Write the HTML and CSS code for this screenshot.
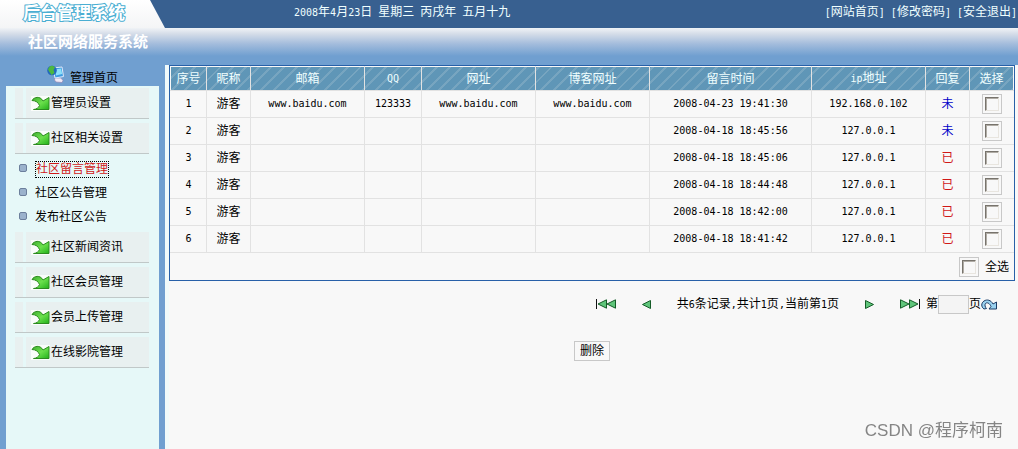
FILE: index.html
```html
<!DOCTYPE html>
<html lang="zh-CN">
<head>
<meta charset="utf-8">
<title>后台管理系统</title>
<link rel="stylesheet" href="styles.css">
</head>
<body>
<svg class="defs" aria-hidden="true">
  <defs>
    <linearGradient id="leaf" x1="0" y1="0" x2="1" y2="1"><stop offset="0" stop-color="#3fae30"/><stop offset=".5" stop-color="#6be04c"/><stop offset="1" stop-color="#22b01a"/></linearGradient>
    <symbol id="arrow" viewBox="0 0 19 15">
      <rect width="19" height="15" fill="#fafdfb"/>
      <path d="M1 4.500C3 1 9 -.5 12 5L18 1.500V13.500H2.500C5 13.500 8 11.500 8.500 9.500C7.500 6.500 4.500 4.500 1 4.500Z" fill="url(#leaf)" stroke="#2d8b20"/>
    </symbol>
    <symbol id="tri" viewBox="0 0 9 9"><path d="M.5.5V8.500L8.500 4.500Z" fill="#5fc57a" stroke="#155c28"/></symbol>
    <symbol id="end" viewBox="0 0 20 10"><path d="M.5.8V9.200L9 5ZM9.500.8V9.200L18 5Z" fill="#5fc57a" stroke="#155c28"/><path d="M19.500 0V10" stroke="#111"/></symbol>
  </defs>
</svg>
<header>
  <div class="topbar">
    <div class="logo"><span>后台管理系统</span></div>
    <div class="date"><span class="num">2008</span>年<span class="num">4</span>月<span class="num">23</span>日<span class="num"> </span>星期三<span class="num"> </span>丙戌年<span class="num"> </span>五月十九</div>
    <nav class="toplinks"><a href="#"><span class="num">[</span>网站首页<span class="num">]</span></a><a href="#"><span class="num">[</span>修改密码<span class="num">]</span></a><a href="#"><span class="num">[</span>安全退出<span class="num">]</span></a></nav>
  </div>
  <h1 class="title">社区网络服务系统</h1>
</header>
<div class="layout">
  <aside class="sidebar">
    <a class="home" href="#">
      <svg width="18" height="18" viewBox="0 0 18 18"><path d="M8 13L14 13L16 15.500L15 17.500L9 17L7.500 15Z" fill="#efeaf6" stroke="#8f86b4" stroke-width=".7"/><path d="M6 3L15 2L16.500 11.500L8 13Z" fill="#3d9be0" stroke="#dfe9fb"/><path d="M8 4.500L14 3.500L15.200 9L9 10.500Z" fill="#8be0fa"/><circle cx="5" cy="5.500" r="4.800" fill="#2368bd"/><path d="M1 4.500C2.500 0 6 0 8 2.500L6.500 5L7.500 8L4.500 10L2.500 7Z" fill="#4cb83f"/></svg>管理首页</a>
    <nav class="menu">
      <a class="item" href="#"><svg class="ico"><use href="#arrow"/></svg>管理员设置</a>
      <a class="item" href="#"><svg class="ico"><use href="#arrow"/></svg>社区相关设置</a>
      <ul class="sub">
        <li><a class="current" href="#">社区留言管理</a></li>
        <li><a href="#">社区公告管理</a></li>
        <li><a href="#">发布社区公告</a></li>
      </ul>
      <a class="item" href="#"><svg class="ico"><use href="#arrow"/></svg>社区新闻资讯</a>
      <a class="item" href="#"><svg class="ico"><use href="#arrow"/></svg>社区会员管理</a>
      <a class="item" href="#"><svg class="ico"><use href="#arrow"/></svg>会员上传管理</a>
      <a class="item" href="#"><svg class="ico"><use href="#arrow"/></svg>在线影院管理</a>
    </nav>
  </aside>
  <main>
    <div class="panel">
      <table>
        <colgroup><col class="c-no"><col class="c-s"><col class="c-m"><col class="c-qq"><col class="c-m"><col class="c-m"><col class="c-time"><col class="c-m"><col class="c-s"><col class="c-s"></colgroup>
        <thead><tr><th>序号</th><th>昵称</th><th>邮箱</th><th><span class="num">QQ</span></th><th>网址</th><th>博客网址</th><th>留言时间</th><th><span class="num">ip</span>地址</th><th>回复</th><th>选择</th></tr></thead>
        <tbody>
          <tr><td class="num">1</td><td>游客</td><td class="num">www.baidu.com</td><td class="num">123333</td><td class="num">www.baidu.com</td><td class="num">www.baidu.com</td><td class="num">2008-04-23 19:41:30</td><td class="num">192.168.0.102</td><td><a class="no" href="#">未</a></td><td><input type="checkbox" aria-label="选择 1"></td></tr>
          <tr><td class="num">2</td><td>游客</td><td></td><td></td><td></td><td></td><td class="num">2008-04-18 18:45:56</td><td class="num">127.0.0.1</td><td><a class="no" href="#">未</a></td><td><input type="checkbox" aria-label="选择 2"></td></tr>
          <tr><td class="num">3</td><td>游客</td><td></td><td></td><td></td><td></td><td class="num">2008-04-18 18:45:06</td><td class="num">127.0.0.1</td><td><a class="yes" href="#">已</a></td><td><input type="checkbox" aria-label="选择 3"></td></tr>
          <tr><td class="num">4</td><td>游客</td><td></td><td></td><td></td><td></td><td class="num">2008-04-18 18:44:48</td><td class="num">127.0.0.1</td><td><a class="yes" href="#">已</a></td><td><input type="checkbox" aria-label="选择 4"></td></tr>
          <tr><td class="num">5</td><td>游客</td><td></td><td></td><td></td><td></td><td class="num">2008-04-18 18:42:00</td><td class="num">127.0.0.1</td><td><a class="yes" href="#">已</a></td><td><input type="checkbox" aria-label="选择 5"></td></tr>
          <tr><td class="num">6</td><td>游客</td><td></td><td></td><td></td><td></td><td class="num">2008-04-18 18:41:42</td><td class="num">127.0.0.1</td><td><a class="yes" href="#">已</a></td><td><input type="checkbox" aria-label="选择 6"></td></tr>
        </tbody>
      </table>
      <label class="all"><input type="checkbox">全选</label>
    </div>
    <div class="pager">
      <a href="#" aria-label="首页"><svg class="flip" width="20" height="10"><use href="#end"/></svg></a>
      <a href="#" aria-label="上一页"><svg class="flip" width="9" height="9"><use href="#tri"/></svg></a>
      <span class="count">共<span class="num">6</span>条记录<span class="num">,</span>共计<span class="num">1</span>页<span class="num">,</span>当前第<span class="num">1</span>页</span>
      <a href="#" aria-label="下一页"><svg width="9" height="9"><use href="#tri"/></svg></a>
      <a href="#" aria-label="末页"><svg width="20" height="10"><use href="#end"/></svg></a>
      <div class="jump">
        <label for="page">第</label><input id="page" type="text"><span>页</span>
        <a href="#" aria-label="跳转"><svg width="16" height="11" viewBox="0 0 16 11"><path d="M3 10C0 8 0 4 3 2C6 0 10 1 12 5L15.500 3V10H8L10 7.500C8.500 4 6 3 4.500 4.500C3.500 6 4 8 5.500 9.500Z" fill="#9ad2f0" stroke="#1d3c66"/></svg></a>
      </div>
    </div>
    <div class="actions"><button type="button">删除</button></div>
  </main>
</div>
<div class="watermark">CSDN @程序柯南</div>
</body>
</html>
```
FILE: styles.css
```css
* { box-sizing: border-box; }
body {
  margin: 0;
  min-height: 100vh;
  display: flex;
  flex-direction: column;
  background: #f8f8f8;
  color: #000;
  font: 12px/16px "Liberation Sans", "Noto Sans CJK SC", sans-serif;
}
a { color: inherit; text-decoration: none; }
svg { display: block; flex: none; }
.defs { position: absolute; width: 0; height: 0; }
.num { font-family: "DejaVu Sans Mono", monospace; font-size: 10px; white-space: pre; }

.topbar {
  display: grid;
  grid-template-columns: 165px 1fr auto;
  height: 28px;
  background: #386090;
  color: #f0ffff;
  line-height: 24px;
}
.logo {
  padding-left: 23px;
  background: linear-gradient(#fff, #f4f5f6);
  clip-path: polygon(0 0, 150px 0, 165px 28px, 0 28px);
  color: #fff;
  font-size: 17px;
  font-weight: bold;
  line-height: 28px;
  -webkit-text-stroke: 2px #4aaed2;
  paint-order: stroke fill;
}
.date { padding-left: 129px; }
.toplinks { display: flex; gap: 6px; padding-right: 1px; }
.title {
  margin: 0;
  height: 37px;
  padding-left: 28px;
  background: linear-gradient(#f0f3f6, #d4dce8 6px, #a3bcdc 16px, #709fd0 28px);
  color: #fff;
  font-size: 15px;
  line-height: 28px;
}

.layout { flex: 1; display: grid; grid-template-columns: 165px 1fr; }
.sidebar {
  display: flex;
  flex-direction: column;
  padding: 0 6px;
  background: #709fd0;
}
.home { display: flex; align-items: flex-end; gap: 5px; height: 21px; padding-left: 41px; }
.home svg { margin-bottom: 3px; }
.menu { flex: 1; padding: 2px 10px 0 9px; background: #e6f8f8; }
.item {
  display: flex;
  align-items: center;
  height: 31px;
  margin-bottom: 4px;
  padding-left: 16px;
  border-bottom: 1px solid #c0c8c8;
  background: linear-gradient(90deg, transparent 8px, #e6f8f8 8px 11px, transparent 11px) 0 0 / 100% 31px border-box, #e8f0f0;
}
.ico { width: 19px; height: 15px; margin-right: 1px; }
.sub { list-style: none; margin: 0; padding: 0 0 2px; }
.sub li { display: flex; align-items: center; gap: 8px; height: 24px; padding: 0 0 2px 4px; }
.sub li::before {
  content: "";
  width: 6px;
  height: 6px;
  margin-bottom: 2px;
  border: 1px solid #6c7f9c;
  border-radius: 2px;
  background: #9bb2cc;
}
.sub a { border: 1px solid transparent; border-width: 1px 0; line-height: 15px; }
.sub .current { border: 1px dotted #000; color: #d01818; }

main { padding: 0 3px 0 0; border-left: 4px solid #f0fafa; }
.panel { border: 1px solid #2860a8; }
table { width: 100%; table-layout: fixed; border-collapse: collapse; }
.c-no { width: 36px; }
.c-s { width: 44px; }
.c-m { width: 114px; }
.c-qq { width: 57px; }
.c-time { width: 162px; }
th, td { height: 27px; padding: 0; border: 1px solid #e2e2e2; text-align: center; }
tr > :first-child { border-left-color: #f8f8f8; }
tr > :last-child { border-right-color: #f8f8f8; }
thead tr { background: repeating-linear-gradient(135deg, #5f96b7 0 7px, #77a5c0 7px 9px); }
th { height: 24px; border-top-color: #f8f8f8; color: #f0ffff; font-weight: normal; }
.no { color: #0000c8; }
.yes { color: #d01818; }
input[type="checkbox"] {
  appearance: none;
  display: grid;
  place-content: center;
  width: 20px;
  height: 20px;
  margin: 0 auto;
  border: 1px solid #c8c8c8;
  background: #f8f8f8;
}
input[type="checkbox"]::before {
  content: "";
  width: 12px;
  height: 12px;
  border: 1px solid;
  border-color: #77736c #e8e5df #e8e5df #77736c;
  box-shadow: inset 1px 1px #b0aca5;
}
input[type="checkbox"]:checked::before { background: #386090; }
.all { display: flex; align-items: center; justify-content: flex-end; gap: 6px; height: 27px; padding-right: 5px; }
.all input { margin: 0; }
.pager { display: flex; align-items: center; justify-content: flex-end; height: 20px; margin-top: 13px; padding-right: 18px; }
.pager > a { margin-right: 26px; }
.pager > a:nth-of-type(4) { margin-right: 6px; }
.count { margin-right: 26px; }
.flip { transform: scaleX(-1); }
.jump { display: flex; align-items: center; }
.jump input { width: 31px; height: 19px; padding: 0 2px; border: 1px solid #c8c8c8; background: #f4f4f4; font: inherit; }
.actions { margin-top: 27px; text-align: center; }
button { height: 20px; padding: 0 5px; border: 1px solid #c8c8c8; background: #f8f8f8; color: #000; font: inherit; }
.watermark {
  position: fixed;
  right: 15px;
  bottom: 6px;
  color: #858585;
  font: 17px/24px "Liberation Sans", "Noto Sans CJK SC", sans-serif;
}
```
